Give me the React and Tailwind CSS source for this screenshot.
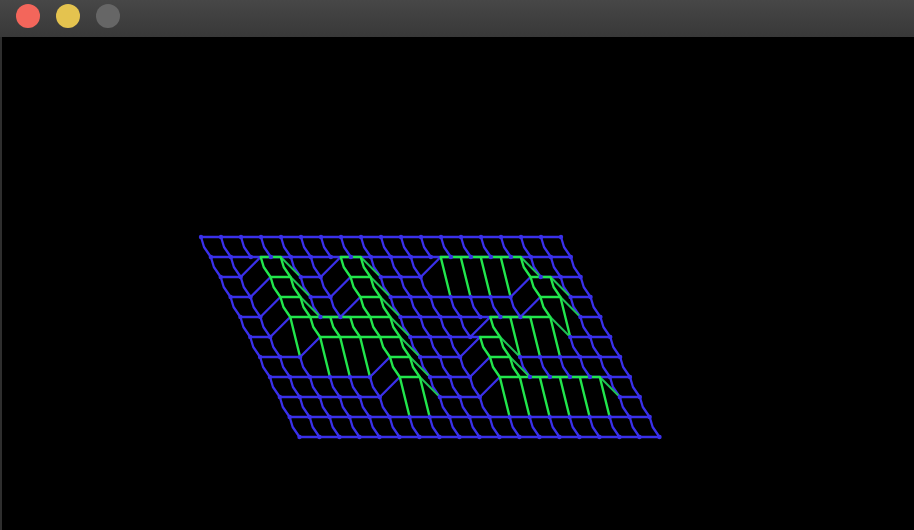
const BLUE = "#3a30ea";
const GREEN = "#22e64c";
const COLS = 19;
const ROWS = 11;

// raised columns per row of the grid
const raised = {
  2: [2, 3, 6, 7, 11, 12, 13, 14, 15],
  3: [2, 3, 6, 7, 15, 16],
  4: [2, 3, 6, 7, 15, 16],
  5: [2, 3, 4, 5, 6, 7, 12, 13, 14, 15],
  6: [3, 4, 5, 6, 7, 11, 12],
  7: [6, 7, 11, 12],
  8: [6, 7, 11, 12, 13, 14, 15, 16],
};

const isUp = (i, j) => (raised[j] || []).includes(i);
const px = (i, j) => 201 + 20 * i + 9.85 * j;
const py = (i, j) => 237 + 20 * j - (isUp(i, j) ? 20 : 0);

function buildEdges() {
  const blue = [];
  const green = [];
  const fade = [];
  for (let j = 0; j < ROWS; j++) {
    for (let i = 0; i < COLS; i++) {
      const x = px(i, j);
      const y = py(i, j);
      if (i < COLS - 1) {
        const x2 = px(i + 1, j);
        const y2 = py(i + 1, j);
        const line = `M${x} ${y}L${x2} ${y2}`;
        if (isUp(i, j) && isUp(i + 1, j)) green.push(line);
        else if (isUp(i, j)) fade.push(`M${x} ${y}L${x + (x2 - x) * 0.9} ${y + (y2 - y) * 0.9}`);
        else blue.push(line);
      }
      if (j < ROWS - 1) {
        const x2 = px(i, j + 1);
        const y2 = py(i, j + 1);
        const sameLevel = isUp(i, j) === isUp(i, j + 1);
        // elbow halfway, the way the lines come out in the picture
        const line = sameLevel
          ? `M${x} ${y}L${x + 3} ${(y + y2) / 2}L${x2} ${y2}`
          : `M${x} ${y}L${x2} ${y2}`;
        if (isUp(i, j)) green.push(line);
        else blue.push(line);
      }
    }
  }
  return { blue, green, fade };
}

function Mesh() {
  const { blue, green, fade } = buildEdges();
  const dots = [];
  for (let j = 0; j < ROWS; j++) {
    for (let i = 0; i < COLS; i++) {
      if (!isUp(i, j)) dots.push([px(i, j), py(i, j)]);
    }
  }
  return (
    <svg
      className="block w-full h-full blur-[0.5px]"
      viewBox="2 37 912 493"
      fill="none"
      strokeLinecap="round"
      strokeLinejoin="round"
    >
      <path d={blue.join("")} stroke={BLUE} strokeWidth="2.3" />
      <path d={fade.join("")} stroke="#1fbf55" strokeWidth="2" />
      <path d={green.join("")} stroke={GREEN} strokeWidth="2.4" />
      {dots.map(([x, y]) => (
        <circle key={`${x}-${y}`} cx={x} cy={y} r="2.2" fill={BLUE} />
      ))}
    </svg>
  );
}

export default function App() {
  return (
    <div className="w-[914px] h-[530px] flex flex-col bg-black overflow-hidden">
      <div className="h-[37px] shrink-0 flex items-start gap-4 pl-4 pt-1 bg-gradient-to-b from-[#474747] to-[#383838]">
        <div className="w-6 h-6 rounded-full bg-[#f3665b]" />
        <div className="w-6 h-6 rounded-full bg-[#e4c34f]" />
        <div className="w-6 h-6 rounded-full bg-[#666666]" />
      </div>
      <div className="flex-1 min-h-0 border-l-2 border-[#2e2e2e]">
        <Mesh />
      </div>
    </div>
  );
}
